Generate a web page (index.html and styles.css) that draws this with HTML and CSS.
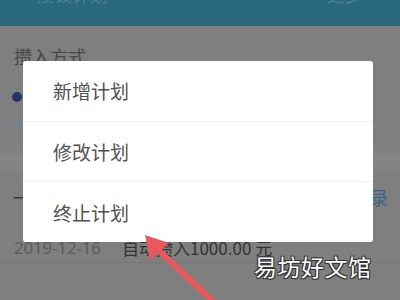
FILE: index.html
```html
<!DOCTYPE html>
<html lang="zh">
<head>
<meta charset="utf-8">
<link rel="stylesheet" href="styles.css">
</head>
<body>
<div class="screen">
  <header class="topbar">
    <span class="top-title">攒钱计划</span>
    <span class="top-action">更多</span>
  </header>
  <main class="page">
    <div class="section-title">攒入方式</div>
    <div class="row-dot"><span class="dot"></span></div>
    <div class="row-tag"><span class="tag"></span></div>
    <div class="band"></div>
    <div class="row-record">
      <span class="dash">一</span>
      <span class="record-link">录</span>
    </div>
    <div class="row-entry">
      <span class="date">2019-12-16</span>
      <span class="desc">自动攒入1000.00 元</span>
    </div>
    <div class="bottom-line"></div>
  </main>

  <div class="dialog">
    <div class="dialog-item">新增计划</div>
    <div class="dialog-item">修改计划</div>
    <div class="dialog-item">终止计划</div>
  </div>

  <svg class="arrow" width="400" height="300" viewBox="0 0 400 300">
    <line x1="214" y1="302" x2="156" y2="248" stroke="#e8585c" stroke-width="6" stroke-linecap="round"/>
    <polygon points="145,235 169,243 150,260" fill="#e8585c"/>
  </svg>

  <div class="watermark">易坊好文馆</div>
</div>
</body>
</html>
```
FILE: styles.css
```css
* { box-sizing: border-box; }
html, body { margin: 0; padding: 0; }
body {
  width: 400px;
  height: 300px;
  overflow: hidden;
  background: #7f7f7f;
  font-family: "Noto Sans CJK SC", "Noto Sans", sans-serif;
}
.screen {
  position: relative;
  width: 400px;
  height: 300px;
  overflow: hidden;
}
.topbar {
  height: 26px;
  background: #2b697e;
  display: flex;
  justify-content: space-between;
  padding: 0 38px 0 36px;
  border-bottom: 1px solid #3a6370;
}
.top-title, .top-action {
  margin-top: -17px;
  font-size: 18px;
  line-height: 22px;
  color: rgba(200, 220, 228, 0.22);
}
.page {
  display: flex;
  flex-direction: column;
}
.section-title {
  margin-top: 19px;
  padding-left: 14px;
  font-size: 18px;
  line-height: 22px;
  color: #474747;
}
.row-dot {
  height: 35px;
  padding: 25px 0 0 12px;
}
.dot {
  display: block;
  width: 10px;
  height: 10px;
  border-radius: 50%;
  background: #29336e;
}
.row-tag {
  height: 30px;
  padding: 20px 0 0 13px;
}
.tag {
  display: block;
  width: 8px;
  height: 5px;
  border-radius: 2px;
  background: #6d85a0;
}
.band {
  margin-top: 14px;
  height: 30px;
  background: linear-gradient(#7f7f7f 0, #868686 45%, #7f7f7f 100%);
}
.row-record {
  height: 42px;
  display: flex;
  justify-content: space-between;
  align-items: center;
  padding: 0 12px 0 13px;
  font-size: 18px;
  color: #3e3e3e;
}
.record-link {
  color: #3a6487;
}
.row-entry {
  height: 42px;
  display: flex;
  align-items: center;
  padding-left: 14px;
  padding-top: 16px;
}
.date {
  width: 108px;
  font-family: "Noto Sans", sans-serif;
  font-size: 17px;
  color: #5c5c5c;
  letter-spacing: -0.2px;
}
.desc {
  font-size: 17px;
  color: #333;
}
.bottom-line {
  margin-top: 2px;
  height: 1px;
  background: #777;
}
.dialog {
  position: absolute;
  left: 23px;
  top: 61px;
  width: 350px;
  height: 181px;
  background: #fff;
  border-radius: 3px;
  display: flex;
  flex-direction: column;
}
.dialog-item {
  flex: 1;
  display: flex;
  align-items: center;
  padding-left: 30px;
  font-size: 19px;
  color: #505050;
  border-top: 1px solid #f0f0f0;
}
.dialog-item:first-child { border-top: none; }
.arrow {
  position: absolute;
  left: 0;
  top: 0;
}
.watermark {
  position: absolute;
  left: 254px;
  top: 250px;
  font-size: 23px;
  line-height: 32px;
  color: #fff;
  letter-spacing: 0.5px;
  text-shadow: 1px 1px 0 #333, -1px -1px 0 #333, 1px -1px 0 #333, -1px 1px 0 #333, 0 1px 1px #333;
}
```
